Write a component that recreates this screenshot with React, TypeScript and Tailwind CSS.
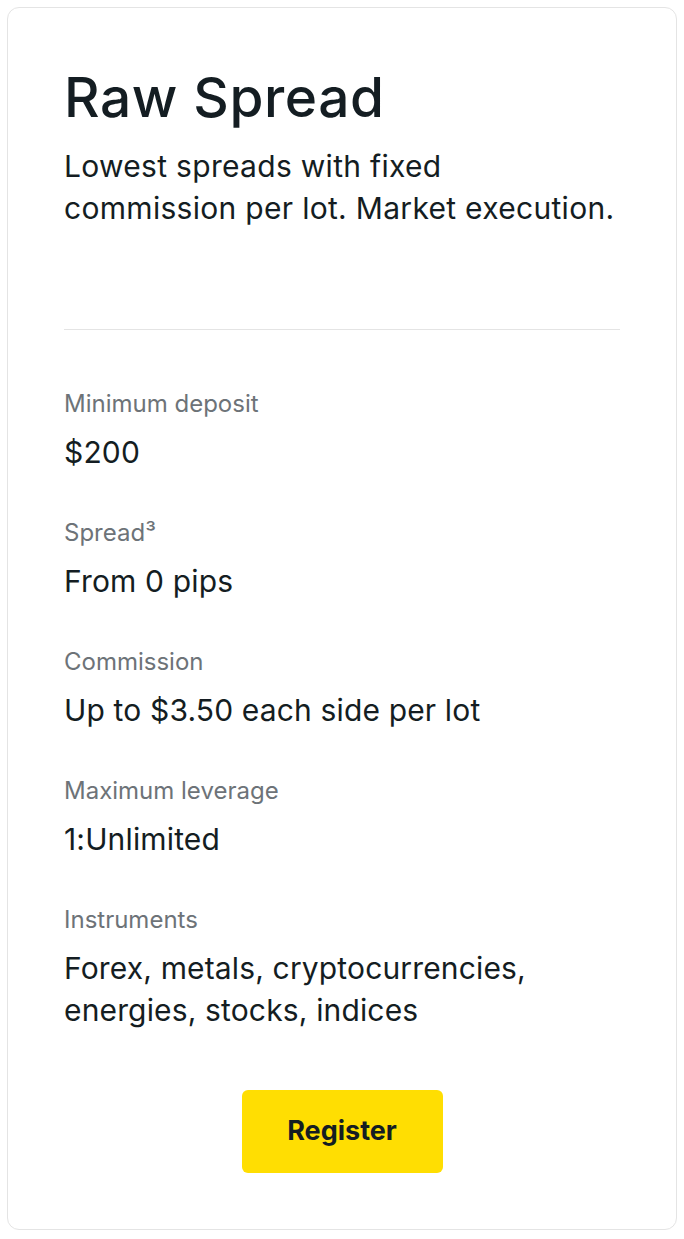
const specs = [
    { label: "Minimum deposit", value: "$200" },
    { label: "Spread³", value: "From 0 pips" },
    { label: "Commission", value: "Up to $3.50 each side per lot" },
    { label: "Maximum leverage", value: "1:Unlimited" },
    { label: "Instruments", value: "Forex, metals, cryptocurrencies, energies, stocks, indices" },
]

const App = () => {

    return (

        <div className="p-[7px] bg-white min-h-screen" style={{ fontFamily: "Inter, 'Noto Sans', sans-serif" }}>

            <div className="border border-[#e4e4e4] rounded-[12px] px-[56px] pt-[61px] pb-[56px]">

                <h1 className="text-[55px] leading-[56px] font-medium text-[#141d22] tracking-[0.6px]">Raw Spread</h1>

                <p className="mt-[20px] text-[30px] leading-[42px] text-[#141d22] tracking-[0.3px]">
                    Lowest spreads with fixed<br />commission per lot. Market execution.
                </p>

                <div className="mt-[100px] border-t border-[#e4e4e4]" />

                <div className="mt-[58px] flex flex-col gap-[44px]">

                    {
                        specs.map((s) => (

                            <div key={s.label}>

                                <div className="text-[24px] leading-[32px] text-[#6d7378]">{s.label}</div>

                                <div className="mt-[11px] text-[30px] leading-[42px] text-[#141d22] tracking-[0.15px]">{s.value}</div>

                            </div>

                        ))
                    }

                </div>

                <div className="mt-[59px] flex justify-center">

                    <button className="w-[201px] h-[83px] rounded-[6px] bg-[#ffde02] text-[27px] font-bold text-[#141d22]">
                        Register
                    </button>

                </div>

            </div>

        </div>

    )

}

export default App
